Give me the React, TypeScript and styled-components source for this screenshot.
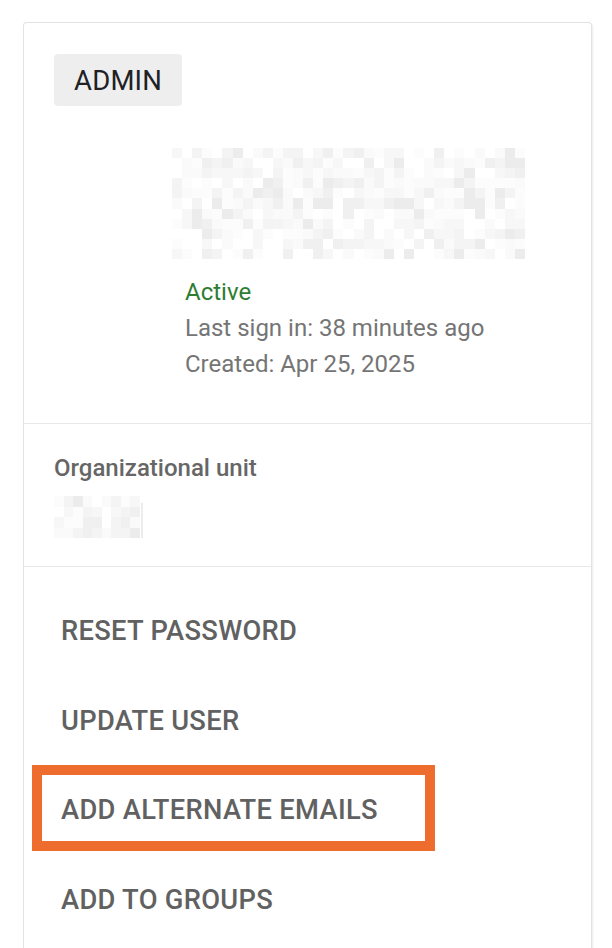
import React from 'react'
import styled, { createGlobalStyle } from 'styled-components'

const GlobalStyle = createGlobalStyle`
  html, body {
    margin: 0;
    padding: 0;
    background: #ffffff;
  }
  body {
    font-family: Roboto, 'Liberation Sans', Arial, sans-serif;
    -webkit-font-smoothing: antialiased;
  }
`

const Page = styled.div`
  height: 948px;
  overflow: hidden;
  padding: 22px 20px 0 23px;
  box-sizing: border-box;
`

const Card = styled.div`
  width: 569px;
  min-height: 960px;
  box-sizing: border-box;
  background: #fff;
  border: 1px solid #e3e3e3;
  border-bottom: none;
  border-radius: 4px 4px 0 0;
  box-shadow: 1px 1px 2px rgba(0, 0, 0, 0.08);
`

const Section = styled.section<{ $pad: string }>`
  padding: ${p => p.$pad};
  border-bottom: 1px solid #e8e8e8;
`

const RoleChip = styled.span`
  display: inline-flex;
  align-items: center;
  height: 52px;
  padding: 0 20px;
  border-radius: 4px;
  background: #eeeeee;
  color: #202124;
  font-size: 27.5px;
  font-weight: 400;
  letter-spacing: 0.2px;
`

const Profile = styled.div`
  margin: 42px 0 0 118px;
  display: flex;
  flex-direction: column;
`

const Mosaic = styled.div<{ $cols: number; $rows: number; $w: number; $h: number }>`
  display: grid;
  grid-template-columns: repeat(${p => p.$cols}, 1fr);
  grid-template-rows: repeat(${p => p.$rows}, 1fr);
  width: ${p => p.$w}px;
  height: ${p => p.$h}px;
`

const Cell = styled.div<{ $shade: string }>`
  background: ${p => p.$shade};
`

const StatusList = styled.div`
  margin: 16px 0 0 13px;
  display: flex;
  flex-direction: column;
`

const StatusLine = styled.div<{ $tone?: 'ok' }>`
  font-size: 24px;
  line-height: 35.8px;
  color: ${p => (p.$tone === 'ok' ? '#2e7d32' : '#757575')};
`

const FieldLabel = styled.div`
  font-size: 24px;
  font-weight: 500;
  line-height: 28px;
  color: #666666;
`

const FieldValue = styled.div`
  margin-top: 14px;
  display: flex;
  align-items: flex-end;
`

const Caret = styled.span`
  width: 2px;
  height: 35px;
  margin-left: 1px;
  background: #ececec;
`

const Actions = styled.div`
  padding-top: 19px;
  display: flex;
  flex-direction: column;
`

const ActionButton = styled.button<{ $marked?: boolean }>`
  position: relative;
  height: 89.5px;
  padding: 0 0 0 37px;
  border: none;
  background: none;
  text-align: left;
  font-family: Roboto, 'Liberation Sans', Arial, sans-serif;
  font-size: 27.3px;
  font-weight: 500;
  letter-spacing: 0.3px;
  color: #616161;
  cursor: pointer;

  &::after {
    content: '';
    display: ${p => (p.$marked ? 'block' : 'none')};
    position: absolute;
    left: 8px;
    top: 0;
    width: 403px;
    height: 86px;
    box-sizing: border-box;
    border: 10px solid #ee6d2e;
  }
`

const SHADES = ['#ffffff', '#fcfcfc', '#fafafa', '#f7f7f7', '#f4f4f4', '#f0f0f0', '#ececec']

function makeShades(count: number, seed: number): string[] {
  let s = seed
  const out: string[] = []
  for (let i = 0; i < count; i++) {
    s = (s * 1103515245 + 12345) & 0x7fffffff
    const r = (s >>> 8) % 100
    const idx = r < 18 ? 0 : r < 38 ? 1 : r < 55 ? 2 : r < 70 ? 3 : r < 83 ? 4 : r < 93 ? 5 : 6
    out.push(SHADES[idx])
  }
  return out
}

const PixelBlock: React.FC<{ cols: number; rows: number; w: number; h: number; seed: number }> = ({
  cols,
  rows,
  w,
  h,
  seed,
}) => {
  const shades = makeShades(cols * rows, seed)
  return (
    <Mosaic $cols={cols} $rows={rows} $w={w} $h={h}>
      {shades.map((c, i) => (
        <Cell key={i} $shade={c} />
      ))}
    </Mosaic>
  )
}

const actions = ['RESET PASSWORD', 'UPDATE USER', 'ADD ALTERNATE EMAILS', 'ADD TO GROUPS']

export default function App() {
  return (
    <>
      <GlobalStyle />
      <Page>
        <Card>
          <Section $pad="31px 30px 41px 30px">
            <RoleChip>ADMIN</RoleChip>
            <Profile>
              <PixelBlock cols={35} rows={11} w={353} h={111} seed={7} />
              <StatusList>
                <StatusLine $tone="ok">Active</StatusLine>
                <StatusLine>Last sign in: 38 minutes ago</StatusLine>
                <StatusLine>Created: Apr 25, 2025</StatusLine>
              </StatusList>
            </Profile>
          </Section>
          <Section $pad="30px 30px 28px 30px">
            <FieldLabel>Organizational unit</FieldLabel>
            <FieldValue>
              <PixelBlock cols={9} rows={4} w={86} h={42} seed={31} />
              <Caret />
            </FieldValue>
          </Section>
          <Actions>
            {actions.map(a => (
              <ActionButton key={a} $marked={a === 'ADD ALTERNATE EMAILS'}>
                {a}
              </ActionButton>
            ))}
          </Actions>
        </Card>
      </Page>
    </>
  )
}
